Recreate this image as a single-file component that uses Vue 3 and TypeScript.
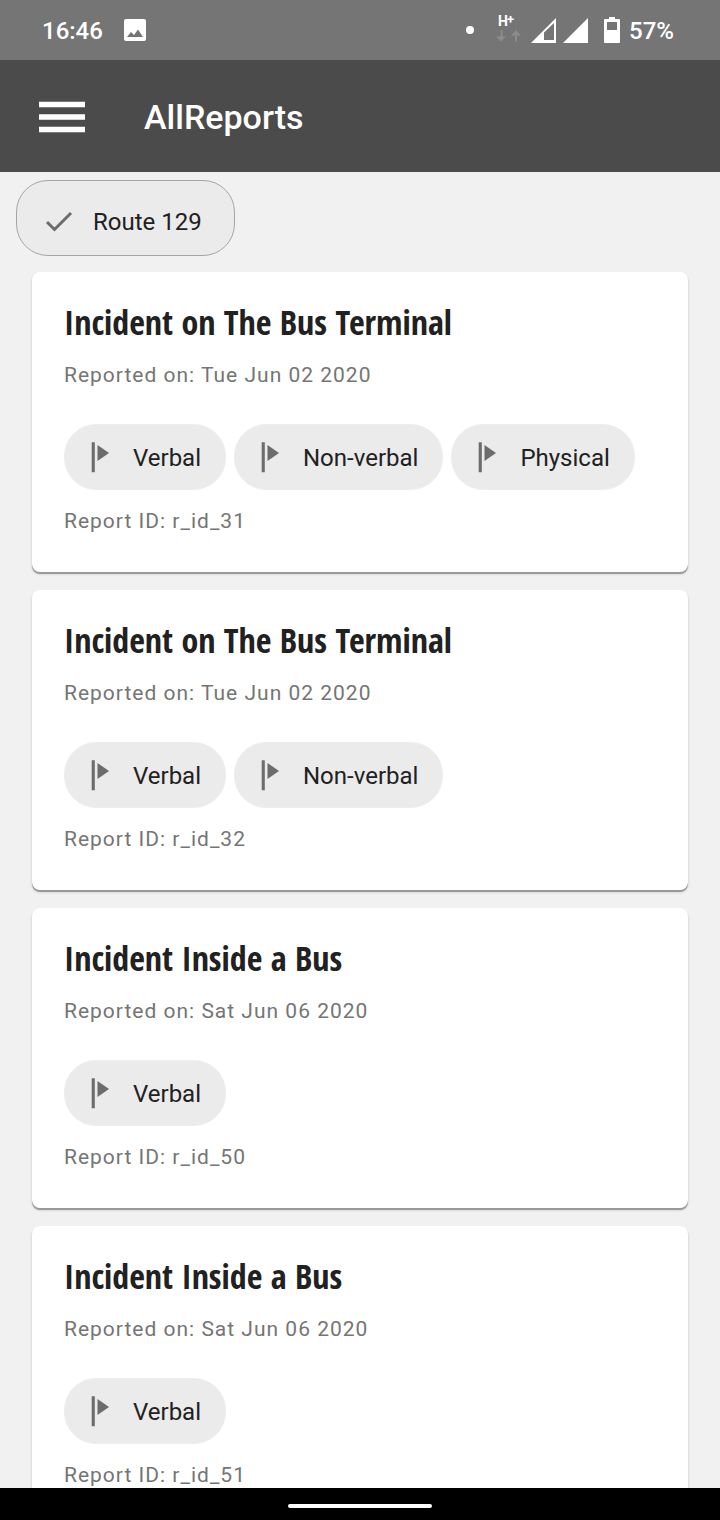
<script setup lang="ts">
interface Report {
  id: string
  title: string
  date: string
  tags: string[]
}

const reports: Report[] = [
  { id: 'r_id_31', title: 'Incident on The Bus Terminal', date: 'Tue Jun 02 2020', tags: ['Verbal', 'Non-verbal', 'Physical'] },
  { id: 'r_id_32', title: 'Incident on The Bus Terminal', date: 'Tue Jun 02 2020', tags: ['Verbal', 'Non-verbal'] },
  { id: 'r_id_50', title: 'Incident Inside a Bus', date: 'Sat Jun 06 2020', tags: ['Verbal'] },
  { id: 'r_id_51', title: 'Incident Inside a Bus', date: 'Sat Jun 06 2020', tags: ['Verbal'] },
]
</script>

<template>
  <div class="screen">
    <div class="status">
      <div class="status-group">
        <span>16:46</span>
        <svg class="picture" width="22" height="22" viewBox="0 0 22 22" aria-hidden="true">
          <rect width="22" height="22" rx="2" fill="#fff" />
          <path d="M3 18 L7 13 L10 16 L14 10.500 L19 18 Z" fill="#757575" />
        </svg>
      </div>
      <div class="status-group">
        <svg class="indicators" width="158" height="36" viewBox="0 0 158 36">
          <circle cx="5" cy="18" r="4" fill="#fff" />
          <text class="network" x="33" y="14">H<tspan class="plus" x="42" y="12">+</tspan></text>
          <path d="M36.500 18 V26 M51 29.500 V21" fill="none" stroke="#8b8b8b" stroke-width="2" />
          <path d="M31 24.500 H41 L36 29.500 Z M46 23.500 H56 L51 18 Z" fill="#8b8b8b" />
          <path fill-rule="evenodd" d="M66 31 L91 6 V31 Z M79 20.500 V28 H89 V11 Z" fill="#fff" />
          <path d="M98 31 L123 6 V31 Z" fill="#fff" />
          <path fill-rule="evenodd" d="M144 5 H150 V7 H154 Q155 7 155 8 V30 Q155 31 154 31 H140 Q139 31 139 30 V8 Q139 7 140 7 H144 Z M142 10 V18 H152 V10 Z" fill="#fff" />
        </svg>
        <span>57%</span>
      </div>
    </div>

    <header class="toolbar">
      <button class="menu" type="button" aria-label="Open menu">
        <svg width="46" height="32" viewBox="0 0 46 32" aria-hidden="true">
          <path d="M0 3.500 H46 M0 16 H46 M0 28.500 H46" stroke="#fff" stroke-width="5.500" />
        </svg>
      </button>
      <h1>AllReports</h1>
    </header>

    <main class="content">
      <button class="chip route" type="button" aria-pressed="true">
        <svg width="28" height="32" viewBox="0 0 28 32" aria-hidden="true">
          <path d="M2 17 L9.500 24.500 L26 8" fill="none" stroke="#6c6c6c" stroke-width="3" />
        </svg>
        <span>Route 129</span>
      </button>

      <article v-for="report in reports" :key="report.id" class="card">
        <h2>{{ report.title }}</h2>
        <p class="meta">Reported on: {{ report.date }}</p>
        <div class="tags">
          <button v-for="tag in report.tags" :key="tag" class="chip" type="button">
            <svg width="28" height="32" viewBox="0 0 28 32" aria-hidden="true">
              <path d="M2.700 1.300 H5.800 V31.300 H2.700 Z M8.500 4 L20 12 L8.500 20 Z" fill="#6c6c6c" />
            </svg>
            <span>{{ tag }}</span>
          </button>
        </div>
        <p class="meta">Report ID: {{ report.id }}</p>
      </article>
    </main>

    <div class="navigation"><span class="handle"></span></div>
  </div>
</template>

<style>
body {
  margin: 0;
}
</style>

<style scoped>
.screen {
  display: flex;
  flex-direction: column;
  height: 100vh;
  overflow: hidden;
  background: #f1f1f1;
  color: #212121;
  font-family: Roboto, "Liberation Sans", sans-serif;
}

.status {
  flex: none;
  display: flex;
  align-items: center;
  justify-content: space-between;
  box-sizing: border-box;
  height: 60px;
  padding: 0 46px 0 42px;
  background: #757575;
  color: #fff;
  font-size: 24px;
  font-weight: 500;
  line-height: 28px;
}

.status-group {
  display: flex;
  align-items: center;
}

.status-group span {
  padding-top: 2px;
}

.picture {
  margin-left: 21px;
}

.indicators {
  margin-right: 6px;
}

.network {
  fill: #fff;
  font-size: 14px;
  font-weight: 700;
}

.plus {
  font-size: 13px;
}

.toolbar {
  flex: none;
  display: flex;
  align-items: center;
  gap: 59px;
  box-sizing: border-box;
  height: 112px;
  padding: 2px 39px 0;
  background: #4b4b4b;
  color: #fff;
}

.menu {
  display: flex;
  padding: 0;
  border: 0;
  background: none;
}

h1 {
  margin: 0;
  font-size: 34px;
  font-weight: 500;
  line-height: 40px;
}

.content {
  flex: 1;
  min-height: 0;
  overflow: hidden;
  padding: 8px 32px 0;
}

.chip {
  display: flex;
  align-items: center;
  gap: 16px;
  box-sizing: border-box;
  height: 66px;
  padding: 0 24px;
  border: 1px solid #eee;
  border-radius: 32px;
  background: #ebebeb;
  color: #212121;
  font-family: inherit;
  font-size: 24px;
  line-height: 28px;
}

.chip span {
  padding-top: 2px;
}

.route {
  gap: 20px;
  height: 76px;
  margin: 0 0 16px -16px;
  padding: 6px 32px 0 28px;
  border-color: #a6a6a6;
}

.card {
  box-sizing: border-box;
  height: 300px;
  margin-bottom: 18px;
  padding: 28px 32px 0;
  border-radius: 8px;
  background: #fff;
  box-shadow: 0 2px 0 #999, 0 2px 3px rgba(0, 0, 0, 0.2);
}

h2 {
  margin: 0 0 17px;
  font-family: "Open Sans Condensed", "Noto Sans Condensed", "Liberation Sans Narrow", sans-serif;
  font-size: 34px;
  font-weight: 700;
  line-height: 44px;
}

.meta {
  margin: 0;
  color: #757575;
  font-size: 21px;
  letter-spacing: 1px;
  line-height: 28px;
}

.tags {
  display: flex;
  flex-wrap: wrap;
  gap: 8px;
  margin: 35px 0 17px;
}

.navigation {
  flex: none;
  display: flex;
  align-items: center;
  justify-content: center;
  height: 32px;
  background: #000;
}

.handle {
  width: 20%;
  height: 4px;
  margin-top: 4px;
  border-radius: 2px;
  background: #fff;
}
</style>
